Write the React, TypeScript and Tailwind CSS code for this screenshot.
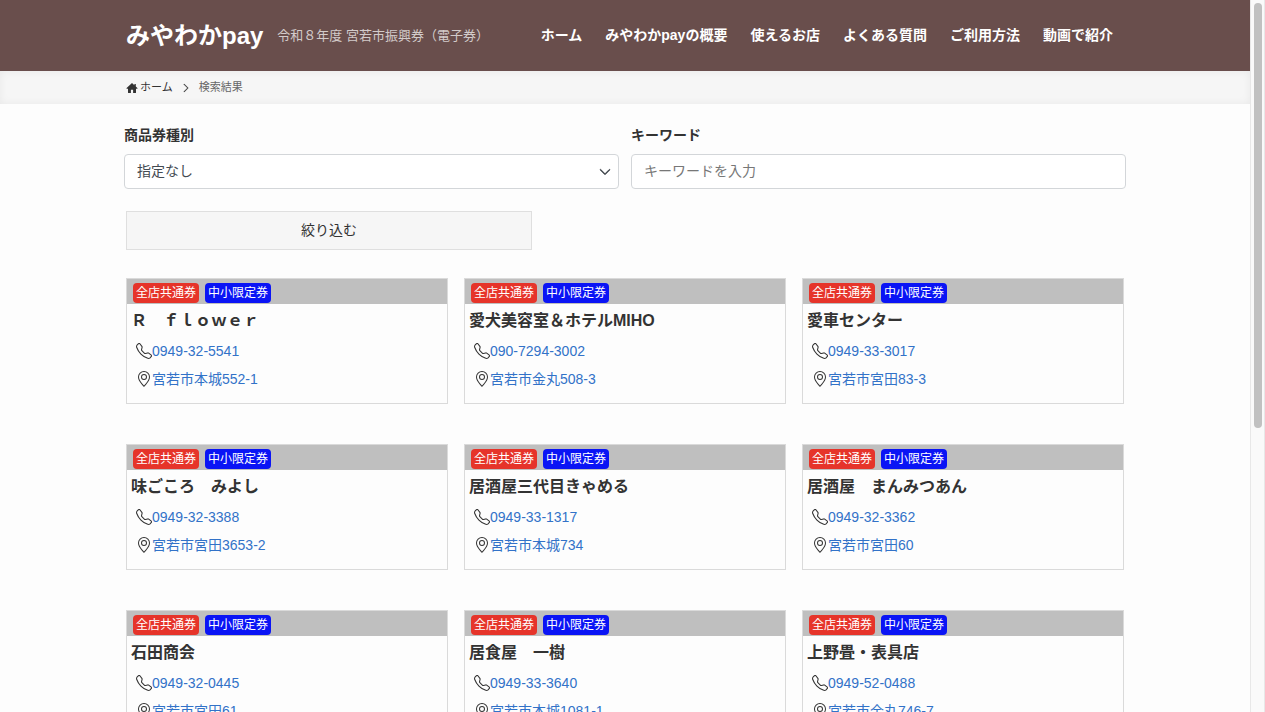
import { BsChevronDown, BsChevronRight, BsGeoAlt, BsTelephone } from "react-icons/bs";

type Shop = { name: string; phone: string; address: string };

const navItems = ["ホーム", "みやわかpayの概要", "使えるお店", "よくある質問", "ご利用方法", "動画で紹介"];

const shops: Shop[] = [
  { name: "Ｒ　ｆｌｏｗｅｒ", phone: "0949-32-5541", address: "宮若市本城552-1" },
  { name: "愛犬美容室＆ホテルMIHO", phone: "090-7294-3002", address: "宮若市金丸508-3" },
  { name: "愛車センター", phone: "0949-33-3017", address: "宮若市宮田83-3" },
  { name: "味ごころ　みよし", phone: "0949-32-3388", address: "宮若市宮田3653-2" },
  { name: "居酒屋三代目きゃめる", phone: "0949-33-1317", address: "宮若市本城734" },
  { name: "居酒屋　まんみつあん", phone: "0949-32-3362", address: "宮若市宮田60" },
  { name: "石田商会", phone: "0949-32-0445", address: "宮若市宮田61" },
  { name: "居食屋　一樹", phone: "0949-33-3640", address: "宮若市本城1081-1" },
  { name: "上野畳・表具店", phone: "0949-52-0488", address: "宮若市金丸746-7" },
];

function HomeIcon() {
  return (
    <svg viewBox="0 0 12 12" className="size-3 shrink-0" fill="currentColor" aria-hidden="true">
      <path d="M6 1 0.6 6.1c-.3.3-.2.6.2.6H2V10.4c0 .3.2.6.6.6H4.9V7.7h2.2V11h2.3c.4 0 .6-.3.6-.6V6.7h1.2c.4 0 .5-.3.2-.6L9.8 4.5V1.9H8.4v1.3Z" />
    </svg>
  );
}

function Header() {
  return (
    <header className="bg-[#694e4c]">
      <div className="mx-auto flex h-[71px] max-w-[998px] items-center text-white">
        <a href="#" className="text-2xl font-bold whitespace-nowrap">みやわかpay</a>
        <p className="ml-[14px] text-[13px] whitespace-nowrap text-[#d3cbca]">令和８年度 宮若市振興券（電子券）</p>
        <nav className="ml-auto pr-[11px] pb-0.5">
          <ul className="flex gap-[23px] text-sm font-bold whitespace-nowrap">
            {navItems.map((item) => (
              <li key={item}><a href="#">{item}</a></li>
            ))}
          </ul>
        </nav>
      </div>
    </header>
  );
}

function Breadcrumb() {
  return (
    <nav aria-label="パンくずリスト" className="bg-[#f6f6f6] shadow-[inset_0_0_8px_rgba(0,0,0,0.06)]">
      <ol className="mx-auto flex h-[33px] max-w-[998px] items-center text-[11px]">
        <li>
          <a href="#" className="flex items-center gap-[2px]"><HomeIcon />ホーム</a>
        </li>
        <li className="flex items-center">
          <BsChevronRight className="mx-2 size-[10px] stroke-[0.5]" aria-hidden="true" />
          <span className="text-[#666]">検索結果</span>
        </li>
      </ol>
    </nav>
  );
}

function SearchForm() {
  return (
    <form className="mx-auto max-w-[1002px]">
      <div className="grid grid-cols-2 gap-3">
        <div>
          <label htmlFor="type" className="block text-sm leading-5 font-bold">商品券種別</label>
          <div className="relative mt-[9px]">
            <select id="type" className="block h-[35px] w-full appearance-none rounded border border-[#d3d6d9] bg-white px-3 pb-0.5 text-sm text-[#444b52]">
              <option>指定なし</option>
              <option>全店共通券</option>
              <option>中小限定券</option>
            </select>
            <BsChevronDown className="pointer-events-none absolute top-3 right-2 size-3 stroke-1 text-[#343a40]" aria-hidden="true" />
          </div>
        </div>
        <div>
          <label htmlFor="keyword" className="block text-sm leading-5 font-bold">キーワード</label>
          <input id="keyword" type="text" placeholder="キーワードを入力" className="mt-[9px] block h-[35px] w-full rounded border border-[#d3d6d9] bg-white px-3 pb-0.5 text-sm placeholder:text-[#777]" />
        </div>
      </div>
      <button type="button" className="mt-[22px] ml-0.5 h-[39px] w-[406px] border border-[#dfdfdf] bg-[#f6f6f6] pb-0.5 text-sm">絞り込む</button>
    </form>
  );
}

function ShopCard({ shop }: { shop: Shop }) {
  return (
    <li className="border border-[#dadada] pb-[10px]">
      <div className="flex h-[25px] items-center gap-[6px] bg-[#bfbfbf] px-[6px] pt-[3px] text-xs text-white">
        <span className="rounded bg-[#e6342a] px-[3px] leading-5">全店共通券</span>
        <span className="rounded bg-[#0a14f5] px-[3px] leading-5">中小限定券</span>
      </div>
      <h2 className="px-1 pt-[5px] text-base leading-6 font-bold">{shop.name}</h2>
      <ul className="mt-1 pl-[9px] text-sm leading-7">
        <li className="flex items-center">
          <BsTelephone className="size-4 shrink-0" aria-hidden="true" />
          <a href="#" className="text-[#3272c8]">{shop.phone}</a>
        </li>
        <li className="flex items-center">
          <BsGeoAlt className="size-4 shrink-0" aria-hidden="true" />
          <a href="#" className="text-[#3272c8]">{shop.address}</a>
        </li>
      </ul>
    </li>
  );
}

function Scrollbar() {
  return (
    <div className="w-[15px] shrink-0 border-x border-[#e8e8e8] bg-[#fafafa] px-[3px] pt-[3px]" aria-hidden="true">
      <div className="h-3/5 w-2 rounded-full bg-[#c1c1c1]" />
    </div>
  );
}

export default function App() {
  return (
    <div className="flex h-screen overflow-hidden bg-[#fdfdfd] font-['Liberation_Sans','Noto_Sans_CJK_JP',sans-serif] text-[#333]" lang="ja">
      <div className="min-w-0 flex-1 overflow-hidden">
        <Header />
        <Breadcrumb />
        <main className="pt-[21px]">
          <SearchForm />
          <ul className="mx-auto mt-7 grid max-w-[998px] grid-cols-3 gap-x-4 gap-y-10">
            {shops.map((shop) => (
              <ShopCard key={shop.name} shop={shop} />
            ))}
          </ul>
        </main>
      </div>
      <Scrollbar />
    </div>
  );
}
